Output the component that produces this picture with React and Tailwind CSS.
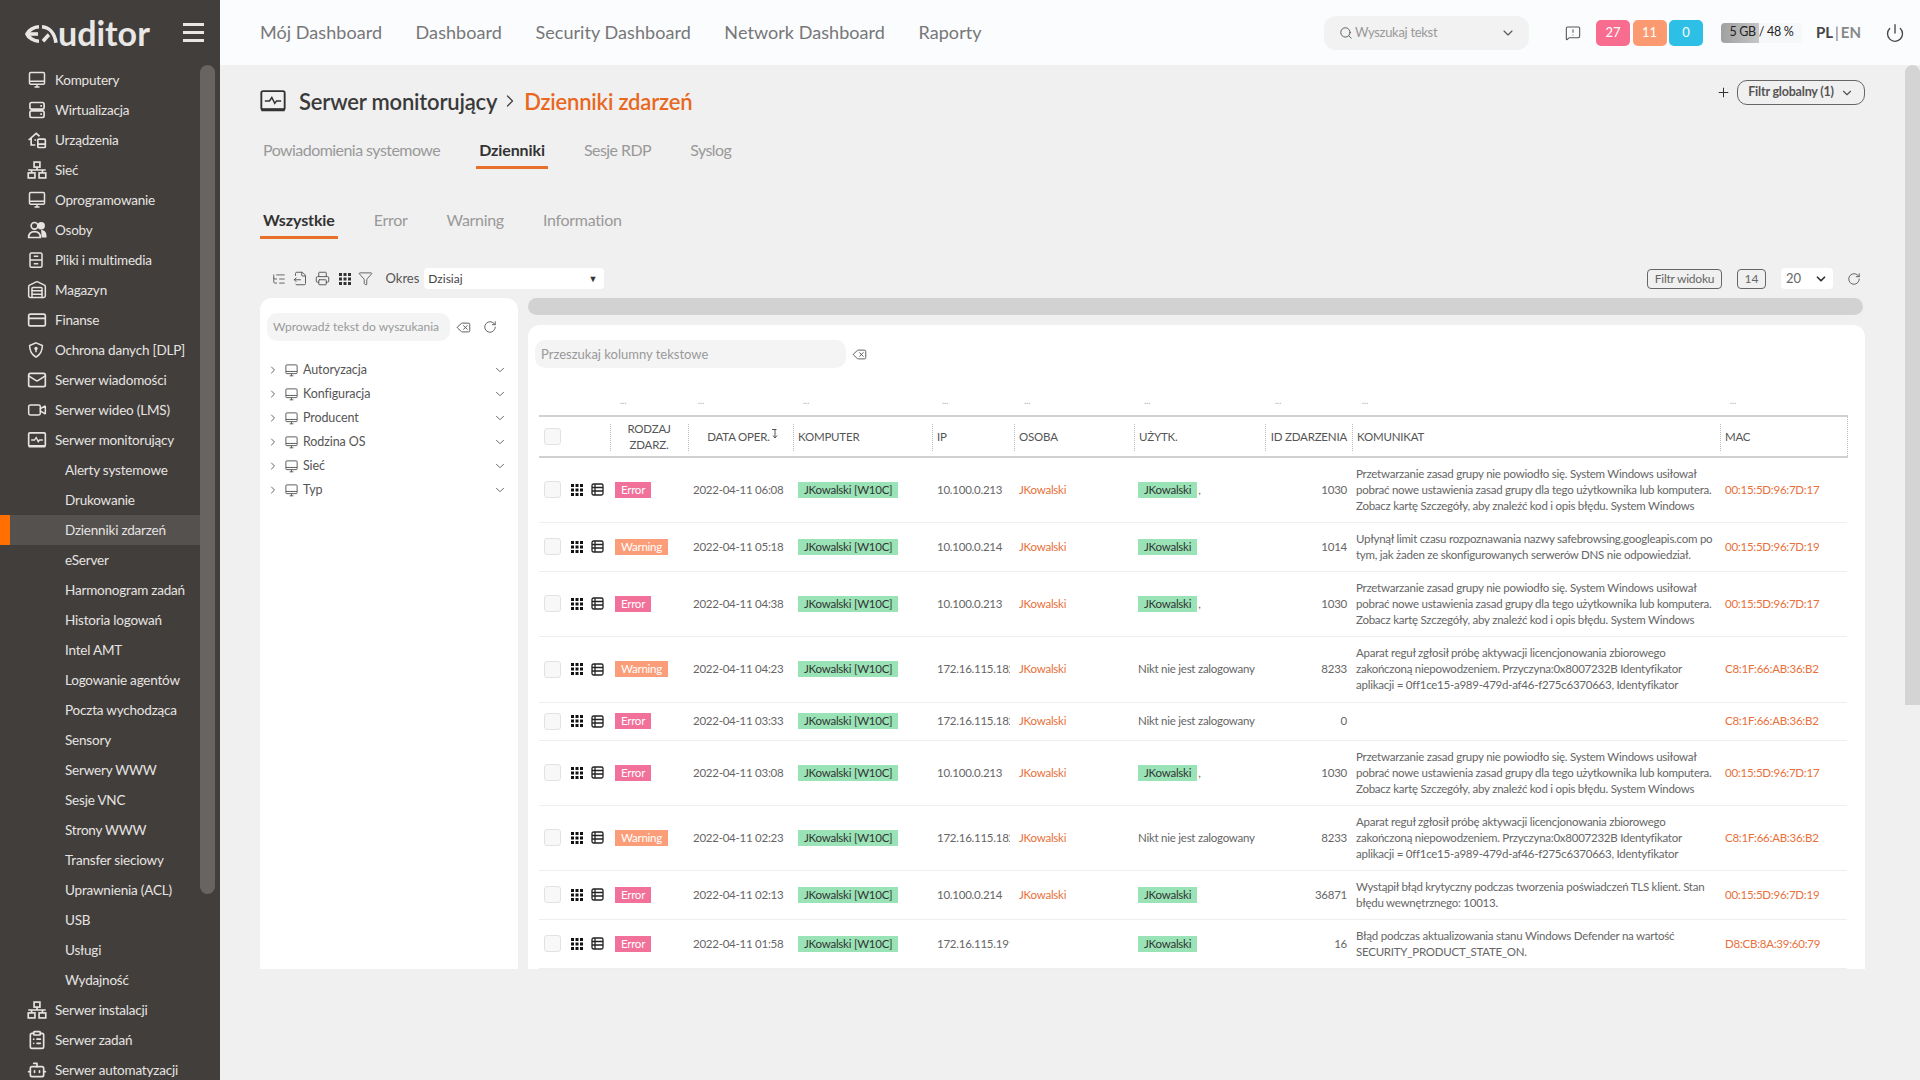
import React from "react";
import {
  Warehouse, CreditCard, Mail, Video, ClipboardList, Bot,
  Search, ChevronDown, ChevronRight, MessageSquareWarning, Power, Plus, RotateCw, ListTree, FileOutput, Printer, Funnel, Delete,
} from "lucide-react";

const House = () => (
  <svg width="20" height="20" viewBox="0 0 24 24" fill="none" stroke="currentColor" strokeWidth="2">
    <path d="M2 12 11 4l4 3.500M5 10v8h5" />
    <rect x="13" y="11" width="9" height="10" rx="1" />
    <path d="M13 17h9M9 12h2" />
  </svg>
);
const Drawers = () => (
  <svg width="18" height="18" viewBox="0 0 24 24" fill="none" stroke="currentColor" strokeWidth="2">
    <rect x="4" y="2.500" width="16" height="19" rx="2" />
    <path d="M4 12h16M9 7h6M9 17h6" />
  </svg>
);
const ShieldDot = () => (
  <svg width="18" height="18" viewBox="0 0 24 24" fill="none" stroke="currentColor" strokeWidth="2">
    <path d="M12 2.500 20.500 6c0 7-2.500 12-8.500 15.500C6 18 3.500 13 3.500 6z" />
    <circle cx="12" cy="10" r="2.200" fill="currentColor" stroke="none" />
    <path d="M12 11v4" />
  </svg>
);
const MonitorPulse = ({ size = 20, sw = 2 }) => (
  <svg width={size} height={size} viewBox="0 0 24 24" fill="none" stroke="currentColor" strokeWidth={sw}>
    <rect x="2" y="3.500" width="20" height="16" rx="1.500" />
    <path d="M2 19.500h20" strokeWidth={sw + 1} />
    <path d="M5 12h4l2-3 2.500 5 1.500-2h4" strokeWidth={sw * 0.8} />
  </svg>
);
const Pc = ({ size = 20, sw = 1.800 }) => (
  <svg width={size} height={size} viewBox="0 0 24 24" fill="none" stroke="currentColor" strokeWidth={sw}>
    <rect x="3" y="3" width="18" height="14" rx="1.500" />
    <path d="M3 13.500h18M9 20.500h6M12 17v3.500" />
  </svg>
);
const ServerI = () => (
  <svg width="20" height="20" viewBox="0 0 24 24" fill="none" stroke="currentColor" strokeWidth="2">
    <rect x="3.500" y="3" width="17" height="8" rx="2" />
    <rect x="3.500" y="13" width="17" height="8" rx="2" />
    <path d="M16 7h2M16 17h2" />
  </svg>
);
const Net = () => (
  <svg width="20" height="20" viewBox="0 0 24 24" fill="none" stroke="currentColor" strokeWidth="2">
    <rect x="8.500" y="2.500" width="7" height="6" />
    <rect x="1.500" y="15.500" width="8" height="6" />
    <rect x="14.500" y="15.500" width="8" height="6" />
    <path d="M12 8.500V12M1.500 12h21M5.500 12v3.500M18.500 12v3.500" />
  </svg>
);
const People = () => (
  <svg width="20" height="20" viewBox="0 0 24 24" fill="none" stroke="currentColor" strokeWidth="2">
    <circle cx="9" cy="7" r="4" />
    <path d="M2 21c0-5 3-7 7-7s7 2 7 7z" />
    <circle cx="17" cy="7" r="3.500" fill="currentColor" />
    <path d="M18 13c3 .5 4.500 3 4.500 7h-4z" fill="currentColor" />
  </svg>
);
const Dots = () => (
  <svg width="12" height="12" viewBox="0 0 12 12" fill="currentColor">
    {[0, 4.500, 9].map((y) => [0, 4.500, 9].map((x) => <rect key={x + "-" + y} x={x} y={y} width="3" height="3" />))}
  </svg>
);
const Sheet = () => (
  <svg width="13" height="13" viewBox="0 0 13 13" fill="none" stroke="currentColor" strokeWidth="1.300">
    <rect x="1" y="1" width="11" height="11" rx="1.500" />
    <path d="M1 4.500h11M1 8h11M4 1v11" />
  </svg>
);
const SortDown = () => (
  <svg width="6" height="10" viewBox="0 0 6 10" fill="none" stroke="currentColor" strokeWidth="1" className="inline-block ml-[2px] align-[2px]">
    <path d="M0 .5h4.500M3 .5V9M1 6.500 3 9l2-2.500" />
  </svg>
);
const Logo = () => (
  <div className="flex items-end h-[33px]">
    <svg width="33" height="18" viewBox="0 0 33 18" fill="none" stroke="#e9e7e5" strokeWidth="3.600" className="mb-[6px]">
      <path d="M14 1.800C9 2 3.500 5 2 9c1.500 4 7 7 12 7.200" />
      <path d="M4 9h9" />
      <path d="M17 1.800c7 .5 12.500 6 14 16" />
      <path d="M18 16.200c2-2 4-5 6-6.500" />
    </svg>
    <span className="text-[34px] leading-[33px] font-bold text-[#e9e7e5] h-[33px]">uditor</span>
  </div>
);

const nav = [
  ["Komputery", <Pc />], ["Wirtualizacja", <ServerI />], ["Urządzenia", <House />], ["Sieć", <Net />],
  ["Oprogramowanie", <Pc />], ["Osoby", <People />], ["Pliki i multimedia", <Drawers />], ["Magazyn", <Warehouse size={20} strokeWidth={1.800} />],
  ["Finanse", <CreditCard size={20} strokeWidth={2} />], ["Ochrona danych [DLP]", <ShieldDot />], ["Serwer wiadomości", <Mail size={20} strokeWidth={2} />],
  ["Serwer wideo (LMS)", <Video size={20} strokeWidth={1.800} />], ["Serwer monitorujący", <MonitorPulse />],
];
const subs = ["Alerty systemowe", "Drukowanie", "Dzienniki zdarzeń", "eServer", "Harmonogram zadań", "Historia logowań", "Intel AMT", "Logowanie agentów", "Poczta wychodząca", "Sensory", "Serwery WWW", "Sesje VNC", "Strony WWW", "Transfer sieciowy", "Uprawnienia (ACL)", "USB", "Usługi", "Wydajność"];
const nav2 = [["Serwer instalacji", <Net />], ["Serwer zadań", <ClipboardList size={20} strokeWidth={2} />], ["Serwer automatyzacji", <Bot size={20} strokeWidth={2} />]];

const NavRow = ({ label, icon }) => (
  <div className="h-[30px] flex items-center text-[13.500px] tracking-[-0.2px] text-[#e6e4e2]">
    <div className="w-[55px] pl-[27px] flex shrink-0">{icon}</div>
    <span className="whitespace-nowrap">{label}</span>
  </div>
);

const msg1 = ["Przetwarzanie zasad grupy nie powiodło się. System Windows usiłował", "pobrać nowe ustawienia zasad grupy dla tego użytkownika lub komputera.", "Zobacz kartę Szczegóły, aby znaleźć kod i opis błędu. System Windows"];
const msg2 = ["Upłynął limit czasu rozpoznawania nazwy safebrowsing.googleapis.com po", "tym, jak żaden ze skonfigurowanych serwerów DNS nie odpowiedział."];
const msg3 = ["Aparat reguł zgłosił próbę aktywacji licencjonowania zbiorowego", "zakończoną niepowodzeniem. Przyczyna:0x8007232B Identyfikator", "aplikacji = 0ff1ce15-a989-479d-af46-f275c6370663, Identyfikator"];
const nobody = "Nikt nie jest zalogowany";
const rows = [
  { k: "Error", d: "06:08", ip: "10.100.0.213", os: "JKowalski", u: "JKowalski", c: 1, id: "1030", m: msg1, mac: "00:15:5D:96:7D:17", h: "h-[65px]" },
  { k: "Warning", d: "05:18", ip: "10.100.0.214", os: "JKowalski", u: "JKowalski", id: "1014", m: msg2, mac: "00:15:5D:96:7D:19", h: "h-[49px]" },
  { k: "Error", d: "04:38", ip: "10.100.0.213", os: "JKowalski", u: "JKowalski", c: 1, id: "1030", m: msg1, mac: "00:15:5D:96:7D:17", h: "h-[65px]" },
  { k: "Warning", d: "04:23", ip: "172.16.115.182", os: "JKowalski", n: 1, id: "8233", m: msg3, mac: "C8:1F:66:AB:36:B2", h: "h-[66px]" },
  { k: "Error", d: "03:33", ip: "172.16.115.182", os: "JKowalski", n: 1, id: "0", m: [], mac: "C8:1F:66:AB:36:B2", h: "h-[38px]" },
  { k: "Error", d: "03:08", ip: "10.100.0.213", os: "JKowalski", u: "JKowalski", c: 1, id: "1030", m: msg1, mac: "00:15:5D:96:7D:17", h: "h-[65px]" },
  { k: "Warning", d: "02:23", ip: "172.16.115.182", os: "JKowalski", n: 1, id: "8233", m: msg3, mac: "C8:1F:66:AB:36:B2", h: "h-[65px]" },
  { k: "Error", d: "02:13", ip: "10.100.0.214", os: "JKowalski", u: "JKowalski", id: "36871", m: ["Wystąpił błąd krytyczny podczas tworzenia poświadczeń TLS klient. Stan", "błędu wewnętrznego: 10013."], mac: "00:15:5D:96:7D:19", h: "h-[49px]" },
  { k: "Error", d: "01:58", ip: "172.16.115.191", os: "", u: "JKowalski", id: "16", m: ["Błąd podczas aktualizowania stanu Windows Defender na wartość", "SECURITY_PRODUCT_STATE_ON."], mac: "D8:CB:8A:39:60:79", h: "h-[49px]" },
];
const Box = () => <div className="w-[17px] h-[17px] rounded-[3px] border border-[#e2e2e2] bg-[#f8f8f8] shrink-0" />;
const Th = ({ children, className = "" }) => (
  <th className={"px-[5px] font-normal text-[11.500px] tracking-[-0.2px] leading-[16px] text-[#555] " + className}>
    {children}
  </th>
);
const Sep = () => <div className="absolute left-0 top-[7px] bottom-[5px] border-l border-dotted border-[#bbb]" />;
const widths = ["w-[71px]", "w-[78px]", "w-[105px]", "w-[139px]", "w-[82px]", "w-[120px]", "w-[131px]", "w-[87px]", "w-[368px]", "w-[127px]"];

const Tree = ["Autoryzacja", "Konfiguracja", "Producent", "Rodzina OS", "Sieć", "Typ"];

export default function App() {
  return (
    <div className="h-screen w-full overflow-hidden flex bg-[#f0f0f0] [font-family:Lato,sans-serif] text-[#555]">
      {/* sidebar */}
      <aside className="w-[220px] shrink-0 bg-[#423e3b] flex flex-col h-screen overflow-hidden">
        <div className="h-[65px] shrink-0 flex items-center justify-between pl-[25px] pr-[16px]">
          <Logo />
          <div className="flex flex-col gap-[5.500px] w-[21px]">
            <div className="h-[2.500px] bg-[#e9e7e5]" /><div className="h-[2.500px] bg-[#e9e7e5]" /><div className="h-[2.500px] bg-[#e9e7e5]" />
          </div>
        </div>
        <div className="flex flex-1 min-h-0">
          <div className="w-[200px] shrink-0">
            {nav.map(([l, i]) => <NavRow key={l} label={l} icon={i} />)}
            {subs.map((s) => (
              <div key={s} className={"h-[30px] flex items-center text-[13.500px] tracking-[-0.2px] text-[#e6e4e2] " + (s === "Dzienniki zdarzeń" ? "bg-[#55514e]" : "")}>
                <div className={"w-[10px] h-full mr-[55px] " + (s === "Dzienniki zdarzeń" ? "bg-[#ff7000]" : "")} />
                <span>{s}</span>
              </div>
            ))}
            {nav2.map(([l, i]) => <NavRow key={l} label={l} icon={i} />)}
          </div>
          <div className="w-[15px] h-[829px] bg-[#676461] rounded-[8px]" />
        </div>
      </aside>

      <div className="flex-1 min-w-0 flex flex-col h-screen">
        {/* top bar */}
        <header className="h-[65px] shrink-0 bg-[#fafcfe] flex items-center pl-[40px] pr-[15px]">
          <nav className="flex gap-[33.500px] text-[18px] tracking-[0.06px] text-[#777]">
            {["Mój Dashboard", "Dashboard", "Security Dashboard", "Network Dashboard", "Raporty"].map((t) => <span key={t}>{t}</span>)}
          </nav>
          <div className="ml-auto w-[205px] h-[34px] rounded-[12px] bg-[#f2f2f2] flex items-center pl-[15px] pr-[13px] text-[13px] tracking-[-0.3px] text-[#999]">
            <Search size={14} className="text-[#555] mr-[2px]" strokeWidth={1.600} />
            <span>Wyszukaj tekst</span>
            <ChevronDown size={16} className="ml-auto text-[#555]" strokeWidth={1.600} />
          </div>
          <MessageSquareWarning size={16} className="ml-[36px] text-[#555]" strokeWidth={1.600} />
          <div className="ml-[15px] flex gap-[2.500px] text-[13px] text-white">
            <div className="w-[34px] h-[26px] rounded-[5px] bg-[#f76c8f] flex items-center justify-center">27</div>
            <div className="w-[34px] h-[26px] rounded-[5px] bg-[#fb9a71] flex items-center justify-center">11</div>
            <div className="w-[34px] h-[26px] rounded-[5px] bg-[#2dbfe6] flex items-center justify-center">0</div>
          </div>
          <div className="ml-[18px] relative w-[81px] h-[20px] rounded-[4px] bg-[#f6f7f8] flex items-center justify-center text-[12.500px] tracking-[-0.3px] text-[#222]">
            <div className="absolute left-0 top-0 bottom-0 w-[38px] rounded-l-[4px] bg-linear-to-r from-[#a0a0a0] to-[#c6c6c6]" />
            <span className="relative whitespace-nowrap">5 GB / 48 %</span>
          </div>
          <div className="ml-[14px] w-[45px] flex justify-between text-[15px] font-bold text-[#444] whitespace-nowrap">PL<span className="font-normal text-[#777]">|</span><span className="text-[#888]">EN</span></div>
          <Power size={20} className="ml-[24px] text-[#444]" strokeWidth={1.600} />
        </header>

        <div className="flex-1 min-h-0 flex">
          <main className="flex-1 min-w-0 pl-[40px] pr-[40px] pt-[15px]">
            {/* title */}
            <div className="h-[45px] flex items-start">
              <div className="flex items-center h-[42px] text-[22px] font-semibold tracking-[-0.2px]">
                <div className="text-[#333] -ml-[1px]"><MonitorPulse size={28} sw={1.600} /></div>
                <span className="ml-[12px] text-[#3a3a3a]">Serwer monitorujący</span>
                <ChevronRight size={20} className="mx-[3px] text-[#444]" strokeWidth={1.500} />
                <span className="text-[#e8681f] ml-[1px]">Dzienniki zdarzeń</span>
              </div>
              <div className="ml-auto flex items-center">
                <Plus size={15} className="text-[#333] mr-[6px]" strokeWidth={1.600} />
                <div className="w-[128px] h-[25px] rounded-[10px] border border-[#666] flex items-center justify-center gap-[6px] text-[12.500px] tracking-[-0.2px] font-bold text-[#555]">
                  Filtr globalny (1)<ChevronDown size={14} strokeWidth={2} />
                </div>
              </div>
            </div>
            {/* tabs */}
            <div className="mt-[10px] h-[34px] flex gap-[33px] text-[16px] tracking-[-0.55px] text-[#999]">
              {["Powiadomienia systemowe", "Dzienniki", "Sesje RDP", "Syslog"].map((t) => (
                <div key={t} className={"h-[34px] px-[3px] pt-[3px] " + (t === "Dzienniki" ? "font-bold tracking-[-0.1px] text-[#333] border-b-[3px] border-[#e8702a]" : "")}>{t}</div>
              ))}
            </div>
            <div className="mt-[36px] h-[34px] flex gap-[33px] text-[16px] tracking-[-0.3px] text-[#999]">
              {["Wszystkie", "Error", "Warning", "Information"].map((t) => (
                <div key={t} className={"h-[34px] px-[3px] pt-[3px] " + (t === "Wszystkie" ? "font-bold tracking-[-0.1px] text-[#333] border-b-[3px] border-[#e8702a]" : "")}>{t}</div>
              ))}
            </div>
            {/* toolbar */}
            <div className="mt-[29px] h-[21px] flex items-center text-[#555]">
              <div className="pl-[12px] flex items-center gap-[7px]">
                <ListTree size={14} strokeWidth={1.500} />
                <FileOutput size={15} strokeWidth={1.500} />
                <Printer size={15} strokeWidth={1.500} />
                <div className="text-[#333] ml-[2px]"><Dots /></div>
                <Funnel size={15} strokeWidth={1.400} />
              </div>
              <span className="ml-[12.500px] text-[13px]">Okres</span>
              <div className="ml-[5px] w-[180px] h-[21px] rounded-[4px] bg-white flex items-center px-[4px] text-[12px] text-[#444]">
                Dzisiaj<span className="ml-auto mr-[3px] text-[9px] text-[#333]">▼</span>
              </div>
              <div className="ml-auto w-[75px] h-[20px] border border-[#666] rounded-[4px] flex items-center justify-center text-[12px] tracking-[-0.25px] text-[#666]">Filtr widoku</div>
              <div className="ml-[15px] w-[29px] h-[20px] border border-[#666] rounded-[4px] flex items-center justify-center text-[12px] text-[#666]">14</div>
              <div className="ml-[15px] w-[52px] h-[21px] rounded-[4px] bg-white flex items-center pl-[5px] pr-[5px] text-[13px] text-[#666]">
                20<ChevronDown size={14} strokeWidth={3} className="ml-auto text-[#333]" />
              </div>
              <RotateCw size={14} strokeWidth={1.500} className="ml-[14px] mr-[4px]" />
            </div>
            {/* panels */}
            <div className="mt-[9px] h-[671px] flex gap-[10px]">
              <section className="w-[258px] shrink-0 bg-white rounded-t-[12px] pt-[15px] pl-[7px]">
                <div className="flex items-center">
                  <div className="w-[183px] h-[28px] rounded-[10px] bg-[#f4f4f4] flex items-center px-[6px] text-[12px] text-[#999] whitespace-nowrap">Wprowadź tekst do wyszukania</div>
                  <Delete size={15} strokeWidth={1.500} className="ml-[6px]" />
                  <RotateCw size={14} strokeWidth={1.500} className="ml-[12px]" />
                </div>
                <div className="mt-[17px]">
                  {Tree.map((t) => (
                    <div key={t} className="h-[24px] flex items-center text-[12.500px] tracking-[-0.1px] text-[#555]">
                      <ChevronRight size={12} strokeWidth={1.800} className="shrink-0" />
                      <div className="ml-[5px] w-[16px]"><Pc size={15} sw={1.500} /></div>
                      <span className="ml-[3px]">{t}</span>
                      <ChevronDown size={14} strokeWidth={1.500} className="ml-auto mr-[11px]" />
                    </div>
                  ))}
                </div>
              </section>
              <div className="flex-1 min-w-0 flex flex-col gap-[10px]">
                <div className="h-[17px] rounded-full bg-[#d2d2d2] mr-[2px] shrink-0" />
                <section className="flex-1 min-h-0 bg-white rounded-t-[12px] overflow-hidden pt-[15px] pl-[7px]">
                  <div className="flex items-center">
                    <div className="w-[311px] h-[28px] rounded-[10px] bg-[#f4f4f4] flex items-center px-[6px] pt-[1px] text-[13px] text-[#999]">Przeszukaj kolumny tekstowe</div>
                    <Delete size={15} strokeWidth={1.500} className="ml-[6px]" />
                  </div>
                  <table className="table-fixed ml-[4px] mt-[18px] w-[1308px]">
                    <colgroup>{widths.map((w) => <col key={w} className={w} />)}</colgroup>
                    <thead>
                      <tr className="h-[30px] border-b-2 border-[#d0d0d0]">
                        <th />
                        {widths.slice(1).map((w) => <th key={w} className="pl-[10px] text-left font-normal text-[9px] text-[#aaa]">...</th>)}
                      </tr>
                      <tr className="h-[41px] border-b-2 border-[#d0d0d0]">
                        <th className="text-left px-[5px]"><Box /></th>
                        <Th className="relative text-center"><Sep />RODZAJ<br />ZDARZ.</Th>
                        <Th className="relative text-center whitespace-nowrap"><Sep /><span className="relative left-[2px]">DATA OPER.<SortDown /></span></Th>
                        <Th className="relative text-left"><Sep />KOMPUTER</Th>
                        <Th className="relative text-left"><Sep />IP</Th>
                        <Th className="relative text-left"><Sep />OSOBA</Th>
                        <Th className="relative text-left"><Sep />UŻYTK.</Th>
                        <Th className="relative text-right whitespace-nowrap"><Sep />ID ZDARZENIA</Th>
                        <Th className="relative text-left"><Sep />KOMUNIKAT</Th>
                        <Th className="relative text-left border-r border-dotted border-[#bbb]"><Sep />MAC</Th>
                      </tr>
                    </thead>
                    <tbody className="text-[11.500px] tracking-[-0.25px] leading-[16px] text-[#666]">
                      {rows.map((r, i) => (
                        <tr key={i} className={"border-b border-[#eeeeee] " + r.h}>
                          <td className="px-[5px]">
                            <div className="flex items-center">
                              <Box />
                              <div className="ml-[10px] text-[#111]"><Dots /></div>
                              <div className="ml-[8px] text-[#222]"><Sheet /></div>
                            </div>
                          </td>
                          <td className="px-[5px]">
                            <span className={"inline-block h-[16px] px-[6px] text-white leading-[16px] " + (r.k === "Error" ? "bg-[#f2719a]" : "bg-[#fb9d78]")}>{r.k}</span>
                          </td>
                          <td className="px-[5px] whitespace-nowrap">2022-04-11 {r.d}</td>
                          <td className="px-[5px]"><span className="inline-block h-[16px] px-[6px] bg-[#9ae3b6] text-[#333] whitespace-nowrap">JKowalski [W10C]</span></td>
                          <td className="pl-[5px] pr-[4px]"><div className="overflow-hidden whitespace-nowrap">{r.ip}</div></td>
                          <td className="px-[5px] text-[#e8703a]">{r.os}</td>
                          <td className="px-[5px] whitespace-nowrap">
                            {r.n ? <span className="-ml-[1px]">{nobody}</span> : <><span className="inline-block h-[16px] px-[6px] -ml-[1px] bg-[#9ae3b6] text-[#333]">{r.u}</span>{r.c ? <span className="ml-[1px]">,</span> : null}</>}
                          </td>
                          <td className="px-[5px] text-right">{r.id}</td>
                          <td className="pl-[4px] pr-[5px]">{r.m.map((l) => <div key={l} className="whitespace-nowrap">{l}</div>)}</td>
                          <td className="px-[5px] text-[#e8703a] whitespace-nowrap">{r.mac}</td>
                        </tr>
                      ))}
                    </tbody>
                  </table>
                </section>
              </div>
            </div>
          </main>
          {/* page scrollbar */}
          <div className="w-[15px] shrink-0">
            <div className="h-[640px] bg-[#d4d4d4] rounded-t-[8px]" />
          </div>
        </div>
      </div>
    </div>
  );
}
